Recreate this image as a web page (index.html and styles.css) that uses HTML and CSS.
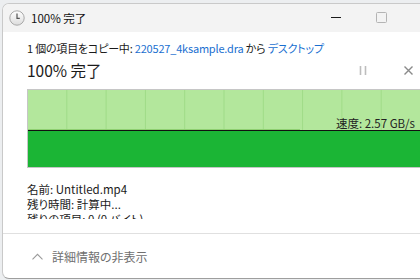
FILE: index.html
```html
<!DOCTYPE html>
<html lang="ja">
<head>
    <meta charset="UTF-8">
    <meta name="viewport" content="width=device-width, initial-scale=1.0">
    <title>100% 完了</title>
    <link rel="stylesheet" href="styles.css">
</head>
<body>
    <div class="window">
        <!-- Title bar -->
        <div class="titlebar">
            <svg class="app-icon" width="16" height="16" viewBox="0 0 16 16">
                <defs>
                    <linearGradient id="face" x1="0" y1="0" x2="0" y2="1">
                        <stop offset="0" stop-color="#ffffff"/>
                        <stop offset="1" stop-color="#dcdcdc"/>
                    </linearGradient>
                </defs>
                <circle cx="8" cy="8" r="7.2" fill="url(#face)" stroke="#a8a8a8" stroke-width="1"/>
                <path d="M8 3.6V8.3H10.8" fill="none" stroke="#555" stroke-width="1.2"/>
            </svg>
            <span class="title">100% 完了</span>
            <!-- minimize / maximize (close button is off-screen) -->
            <svg class="caption-buttons" width="138" height="28" viewBox="0 0 138 28">
                <rect x="18" y="13" width="10" height="1" fill="#1a1a1a"/>
                <rect x="63.5" y="8.5" width="10" height="10" rx="1" fill="none" stroke="#b4b4b4" stroke-width="1"/>
            </svg>
        </div>

        <!-- Copy progress -->
        <div class="content">
            <p class="status">1 個の項目をコピー中: <a class="link">220527_4ksample.dra</a> から <a class="link">デスクトップ</a></p>
            <div class="progress-head">
                <h1 class="percent">100% 完了</h1>
                <div class="controls">
                    <svg width="8" height="9" viewBox="0 0 8 9"><path d="M1.5 0V9M6.5 0V9" stroke="#bdbdbd" stroke-width="1.6"/></svg>
                    <svg width="9" height="9" viewBox="0 0 9 9"><path d="M0.5 0.5L8.5 8.5M8.5 0.5L0.5 8.5" stroke="#8a8a8a" stroke-width="1.4"/></svg>
                </div>
            </div>
            <div class="graph">
                <div class="graph-top">
                    <div class="graph-curve"></div>
                </div>
                <div class="graph-line"></div>
                <div class="graph-bottom"></div>
                <span class="speed">速度: 2.57 GB/s</span>
            </div>
            <div class="details">
                <p>名前: Untitled.mp4</p>
                <p>残り時間: 計算中...</p>
                <p>残りの項目: 0 (0 バイト)</p>
            </div>
        </div>

        <!-- Footer -->
        <div class="footer">
            <svg width="11" height="7" viewBox="0 0 11 7"><path d="M0.5 6.3L5.5 1.3L10.5 6.3" fill="none" stroke="#9a9a9a" stroke-width="1.1"/></svg>
            <span class="more">詳細情報の非表示</span>
        </div>
    </div>
</body>
</html>
```

FILE: styles.css
```css
html, body {
    margin: 0;
    padding: 0;
    height: 100%;
    overflow: hidden;
}
body {
    background-color: #eceef0;
    font-family: "Noto Sans CJK JP", "Noto Sans", sans-serif;
    font-feature-settings: "palt";
    color: #1b1b1b;
}
.window {
    margin: 3px 0 0 2px;
    width: 448px;
    height: 274px;
    background-color: #fff;
    border: 1px solid #c9c9c9;
    border-bottom-color: #9e9e9e;
    border-radius: 7px 7px 0 7px;
    display: flex;
    flex-direction: column;
    overflow: hidden;
}
.titlebar {
    height: 28px;
    flex-shrink: 0;
    background-color: #f3f3f3;
    display: flex;
    align-items: center;
    padding-left: 6px;
}
.app-icon {
    flex-shrink: 0;
}
.title {
    margin-left: 6px;
    font-size: 11.5px;
    color: #111;
}
.caption-buttons {
    margin-left: auto;
    flex-shrink: 0;
}
.content {
    padding: 8px 24px 0 24px;
    flex: 1;
}
.status {
    margin: 0;
    font-size: 11px;
    line-height: 16px;
    letter-spacing: -0.2px;
}
.link {
    color: #1a6fd0;
}
.progress-head {
    display: flex;
    align-items: center;
    margin-top: 3px;
}
.percent {
    margin: 0;
    font-size: 15.5px;
    font-weight: normal;
    line-height: 22px;
}
.controls {
    margin-left: auto;
    display: flex;
    align-items: center;
    gap: 37px;
    padding-right: 14px;
}
.graph {
    position: relative;
    margin-top: 8px;
    border: 1px solid #c6c6c6;
    height: 77px;
    display: flex;
    flex-direction: column;
}
.graph-top {
    height: 40px;
    background-color: #b3e79c;
    background-image: linear-gradient(90deg, transparent 38.3px, #9fdb87 38.3px);
    background-size: 39.3px 100%;
    display: flex;
    align-items: flex-end;
}
.graph-curve {
    width: 272px;
    height: 1px;
    background-color: #8fd071;
}
.graph-line {
    height: 1px;
    background-color: #111;
}
.graph-bottom {
    flex: 1;
    background-color: #1bb535;
}
.speed {
    position: absolute;
    right: 11px;
    top: 25px;
    font-size: 11.5px;
    color: #222;
}
.details {
    margin-top: 14px;
    height: 37px;
    overflow: hidden;
    font-size: 11.5px;
    line-height: 15px;
}
.details p {
    margin: 0;
}
.footer {
    height: 44px;
    flex-shrink: 0;
    border-top: 1px solid #e0e0e0;
    display: flex;
    align-items: center;
    padding-left: 29px;
    gap: 9px;
}
.more {
    font-size: 12px;
    color: #707070;
}
```
